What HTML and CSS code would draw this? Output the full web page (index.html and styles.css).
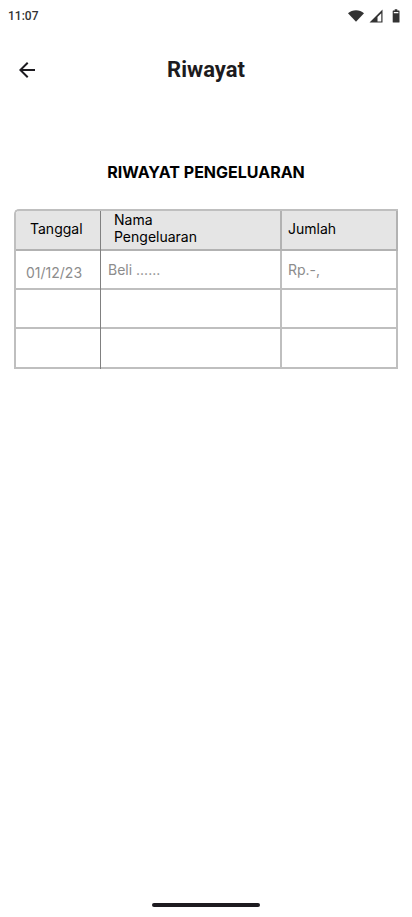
FILE: index.html
```html
<!DOCTYPE html>
<html lang="id">
<head>
<meta charset="utf-8">
<meta name="viewport" content="width=device-width, initial-scale=1">
<title>Riwayat</title>
<link rel="stylesheet" href="styles.css">
</head>
<body>
<div class="screen">
  <div class="status">
    <time>11:07</time>
    <div class="status-icons">
      <svg width="16" height="12" viewBox="0 0 16 12"><path d="M0 3.2C2.2 1.2 5 .2 8 .2s5.800 1 8 3L8 11.800z"/></svg>
      <svg width="14" height="14" viewBox="0 0 14 14"><path fill-rule="evenodd" d="M13.500 .5v13H.5zM12.300 4.200L8.500 8v4.400h3.800z"/></svg>
      <svg class="battery" width="8" height="14" viewBox="0 0 8 14"><path fill-rule="evenodd" d="M2.700 .3h2.600v1.300H7a.5.5 0 0 1 .5.5v11a.5.5 0 0 1-.5.5H1.200a.5.5 0 0 1-.5-.5V2.100a.5.5 0 0 1 .5-.5h1.500zM1.800 2.900v1.300h4.600V2.900z"/></svg>
    </div>
  </div>
  <header class="bar">
    <button class="back" type="button" aria-label="Kembali">
      <svg width="16" height="16" viewBox="0 0 16 16"><path d="M3.825 9L9.425 14.600L8 16L0 8L8 0L9.425 1.400L3.825 7H16V9z"/></svg>
    </button>
    <h1>Riwayat</h1>
  </header>
  <main>
    <h2 id="history">RIWAYAT PENGELUARAN</h2>
    <table aria-labelledby="history">
      <colgroup><col class="date"><col class="name"><col class="amount"></colgroup>
      <thead>
        <tr><th>Tanggal</th><th>Nama<br>Pengeluaran</th><th>Jumlah</th></tr>
      </thead>
      <tbody>
        <tr><td>01/12/23</td><td>Beli ......</td><td>Rp.-,</td></tr>
        <tr><td></td><td></td><td></td></tr>
        <tr><td></td><td></td><td></td></tr>
      </tbody>
    </table>
  </main>
  <div class="home"></div>
</div>
</body>
</html>
```
FILE: styles.css
```css
* { box-sizing: border-box; }
body {
  margin: 0;
  background: #fff;
  font-family: Inter, sans-serif;
  color: #000;
}
.screen {
  min-height: 100vh;
  display: flex;
  flex-direction: column;
}
.status {
  height: 32px;
  padding: 0 12px 0 8px;
  display: flex;
  align-items: center;
  justify-content: space-between;
  font: 500 12px/16px Roboto, sans-serif;
  color: #333;
}
.status-icons {
  display: flex;
  align-items: center;
  gap: 5px;
  fill: #333;
}
.battery { margin-left: 4px; }
.bar {
  height: 76px;
  padding: 0 7px;
  display: grid;
  grid-template-columns: 40px 1fr 40px;
  align-items: center;
}
.back {
  width: 40px;
  height: 40px;
  padding: 0;
  border: 0;
  background: none;
  display: grid;
  place-items: center;
  fill: #1d1b20;
}
h1 {
  margin: 0;
  text-align: center;
  font: 700 22px/28px Roboto, sans-serif;
  color: #1d1b20;
}
main {
  flex: 1;
  padding: 54px 14px 0;
}
h2 {
  margin: 0 0 27px;
  text-align: center;
  font-size: 16px;
  line-height: 20px;
  font-weight: 700;
}
table {
  width: 100%;
  table-layout: fixed;
  border: 2px solid #bfbfbf;
  border-width: 2px 0 0 2px;
  border-radius: 5px 0 0 0;
  border-collapse: separate;
  border-spacing: 0;
  font-size: 14px;
  line-height: 17px;
}
.date { width: 84px; }
.name { width: 182px; }
th, td {
  height: 39px;
  padding: 0 6px;
  border: 2px solid #bfbfbf;
  border-width: 0 2px 2px 0;
  text-align: left;
  font-weight: 400;
}
th {
  height: 40px;
  padding-bottom: 4px;
  background: #e5e5e5;
  border-color: #b2b2b2;
}
th:first-child { padding-left: 14px; border-top-left-radius: 3px; }
th:nth-child(2) { padding-left: 14px; }
td { color: #8c8c8c; }
td:first-child { padding: 6px 0 0 10px; }
td:nth-child(2) { padding-left: 8px; }
/* The divider runs unbroken across the row lines. */
th:first-child, td:first-child {
  position: relative;
  border-right: 0;
  box-shadow: 1px 0 0 #808080;
}
tr:last-child td { height: 40px; }
.home {
  width: 108px;
  height: 4px;
  margin: 0 auto 10px;
  border-radius: 2px;
  background: #1d1b20;
}
```
